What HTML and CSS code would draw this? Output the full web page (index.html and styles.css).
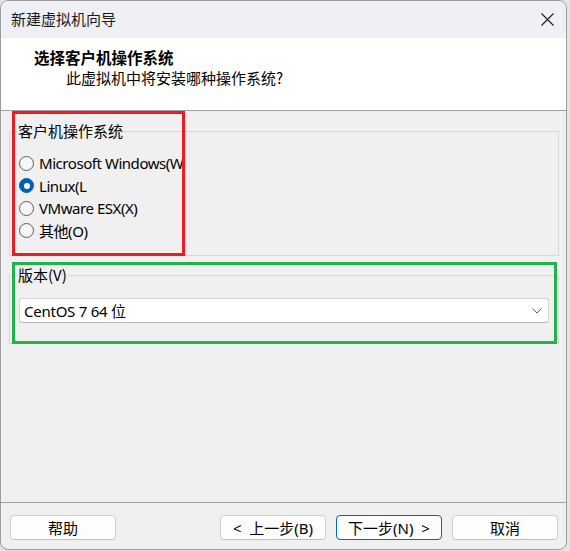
FILE: index.html
```html
<!DOCTYPE html>
<html lang="zh-CN">
<head>
<meta charset="utf-8">
<title>新建虚拟机向导</title>
<link rel="stylesheet" href="styles.css">
</head>
<body>
<div class="window">
  <div class="titlebar">
    <span class="title">新建虚拟机向导</span>
    <svg class="close" width="13" height="13" viewBox="0 0 13 13"><path d="M0.5 0.5 L12.5 12.5 M12.5 0.5 L0.5 12.5" stroke="#1b1b1b" stroke-width="1.1" fill="none"/></svg>
  </div>
  <div class="header">
    <div class="h-title">选择客户机操作系统</div>
    <div class="h-sub">此虚拟机中将安装哪种操作系统?</div>
  </div>
  <div class="content">
    <fieldset class="group g-os">
      <legend>客户机操作系统</legend>
      <div class="radios">
        <div class="radio-row"><span class="radio"></span><span>Microsoft Windows(W</span></div>
        <div class="radio-row"><span class="radio checked"></span><span>Linux(L</span></div>
        <div class="radio-row"><span class="radio"></span><span>VMware ESX(X)</span></div>
        <div class="radio-row"><span class="radio"></span><span>其他(O)</span></div>
      </div>
    </fieldset>
    <fieldset class="group g-ver">
      <legend>版本(V)</legend>
      <div class="combo">
        <span class="combo-text">CentOS 7 64 位</span>
        <svg class="chev" width="10" height="6" viewBox="0 0 10 6"><path d="M0.5 0.5 L5 5 L9.5 0.5" stroke="#5a5a5a" stroke-width="1" fill="none"/></svg>
      </div>
    </fieldset>
  </div>
  <div class="footer">
    <button class="btn">帮助</button>
    <div class="spacer"></div>
    <button class="btn">&lt;&nbsp; 上一步(B)</button>
    <button class="btn primary">下一步(N)&nbsp; &gt;</button>
    <button class="btn">取消</button>
  </div>
  <div class="mark mark-red"></div>
  <div class="mark mark-green"></div>
</div>
</body>
</html>
```
FILE: styles.css
```css
html, body {
  margin: 0;
  padding: 0;
  background: #e4e4e4;
}
body {
  font-family: "Segoe UI", "Noto Sans", "Noto Sans CJK SC", sans-serif;
  font-size: 15px;
  color: #000;
}
.window {
  position: relative;
  box-sizing: border-box;
  width: 567px;
  height: 550px;
  border: 1px solid #9c9c9c;
  border-radius: 8px;
  overflow: hidden;
  background: #f0f0f0;
  display: flex;
  flex-direction: column;
}
.titlebar {
  height: 36px;
  background: #eff0f5;
  display: flex;
  align-items: center;
  justify-content: space-between;
  padding: 0 11px 1px 10px;
}
.title {
  font-family: "Noto Sans CJK SC", sans-serif;
  font-size: 15px;
  line-height: 20px;
  color: #1a1a1a;
}
.close {
  display: block;
  margin-right: 1px;
}
.header {
  background: #fff;
  border-bottom: 1px solid #a0a0a0;
  padding: 9px 0 0 33px;
  box-sizing: border-box;
  height: 73px;
}
.h-title {
  font-family: "Noto Sans CJK SC", sans-serif;
  font-weight: bold;
  font-size: 15.5px;
  line-height: 20px;
}
.h-sub {
  font-family: "Noto Sans CJK SC", sans-serif;
  font-size: 15px;
  line-height: 20px;
  margin: 1px 0 0 32px;
}
.content {
  flex: 1;
  padding: 11px 7px 0 8px;
}
.group {
  margin: 0;
  padding: 0 9px 0 8px;
  border: 1px solid #d9d9d9;
  min-width: 0;
}
.group legend {
  padding: 0;
  font-family: "Noto Sans CJK SC", sans-serif;
  font-size: 15px;
  line-height: 18px;
}
.g-os {
  padding-bottom: 13px;
}
.radios {
  margin-top: 12px;
}
.radio-row {
  display: flex;
  align-items: center;
  height: 22.5px;
  line-height: 20px;
  letter-spacing: -0.45px;
}
.radio {
  box-sizing: border-box;
  width: 15px;
  height: 15px;
  border-radius: 50%;
  border: 1px solid #5d5d5d;
  background: #f6f6f6;
  margin: 0 5px 0 1px;
  flex: none;
  display: flex;
  align-items: center;
  justify-content: center;
}
.radio.checked {
  border-color: #005fb8;
  background: #005fb8;
}
.radio.checked::after {
  content: "";
  width: 6px;
  height: 6px;
  border-radius: 50%;
  background: #fff;
}
.g-ver {
  margin-top: 10px;
  padding-bottom: 20px;
}
.combo {
  margin: 14px 0 0 1px;
  height: 25px;
  box-sizing: border-box;
  background: #fff;
  border: 1px solid #d4d4d4;
  border-bottom-color: #b8b8b8;
  border-radius: 3px;
  display: flex;
  align-items: center;
  justify-content: space-between;
  padding: 0 6px 0 4px;
  line-height: 20px;
}
.combo-text {
  letter-spacing: -0.25px;
}
.chev {
  display: block;
}
.footer {
  border-top: 1px solid #a3a3a3;
  display: flex;
  align-items: flex-start;
  gap: 10px;
  padding: 12px 8px 0 9px;
  height: 47px;
  box-sizing: border-box;
}
.spacer {
  flex: 1;
}
.btn {
  width: 106px;
  height: 25px;
  box-sizing: border-box;
  background: #fdfdfd;
  border: 1px solid #d0d0d0;
  border-bottom-color: #c0c0c0;
  border-radius: 4px;
  font-family: "Segoe UI", "Noto Sans", "Noto Sans CJK SC", sans-serif;
  font-size: 15px;
  line-height: 20px;
  color: #000;
  padding: 0;
}
.btn.primary {
  border: 1px solid #0067c0;
}
.mark {
  position: absolute;
  box-sizing: border-box;
  border: 3px solid;
  pointer-events: none;
}
.mark-red {
  border-color: #ed1c24;
  left: 11px;
  top: 110px;
  width: 173px;
  height: 145px;
}
.mark-green {
  border-color: #22b14c;
  left: 11px;
  top: 261px;
  width: 545px;
  height: 82px;
}
```
